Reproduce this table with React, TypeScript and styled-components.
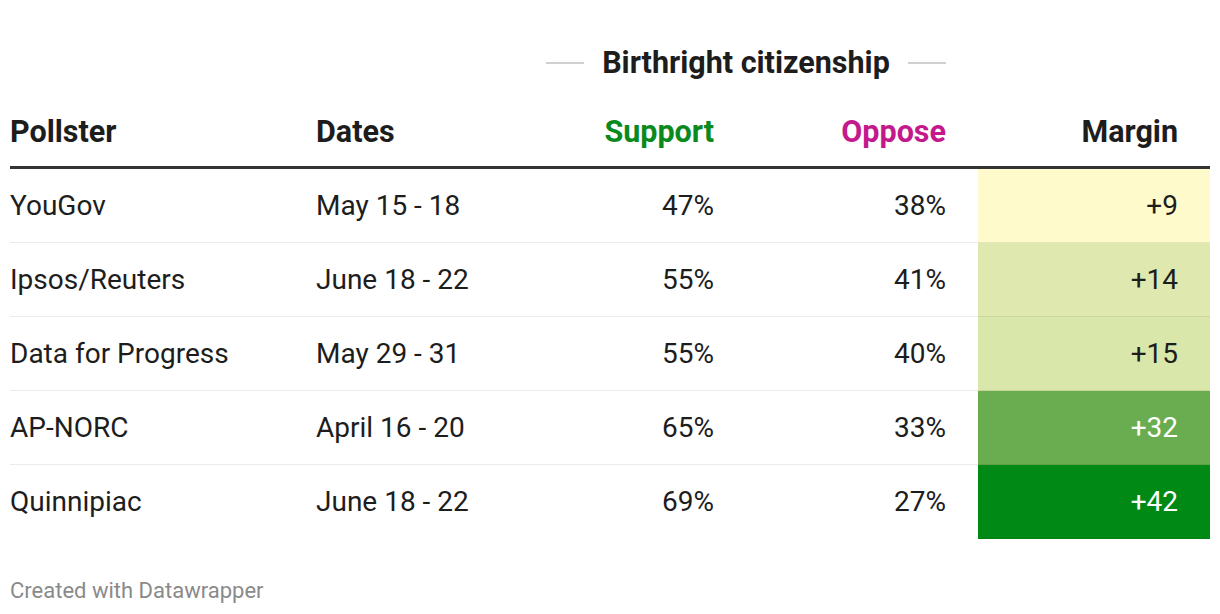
import styled, { createGlobalStyle } from "styled-components";

interface IPoll {
  pollster: string;
  dates: string;
  support: number;
  oppose: number;
  bg: string;
  light: boolean;
}

const polls: IPoll[] = [
  { pollster: "YouGov", dates: "May 15 - 18", support: 47, oppose: 38, bg: "#fefacb", light: false },
  { pollster: "Ipsos/Reuters", dates: "June 18 - 22", support: 55, oppose: 41, bg: "#dee8af", light: false },
  { pollster: "Data for Progress", dates: "May 29 - 31", support: 55, oppose: 40, bg: "#d9e7aa", light: false },
  { pollster: "AP-NORC", dates: "April 16 - 20", support: 65, oppose: 33, bg: "#6aad50", light: true },
  { pollster: "Quinnipiac", dates: "June 18 - 22", support: 69, oppose: 27, bg: "#008a15", light: true },
];

const GlobalStyle = createGlobalStyle`
  html, body {
    margin: 0;
    padding: 0;
    background: #ffffff;
  }
  body {
    font-family: Roboto, "Liberation Sans", sans-serif;
    color: #1d1d1d;
  }
`;

const COLUMNS = "306px 230px 184px 248px 232px";

const Chart = styled.div`
  width: 1200px;
  padding: 43px 10px 0;
`;

const TitleRow = styled.div`
  display: grid;
  grid-template-columns: ${COLUMNS};
`;

const GroupTitle = styled.div`
  grid-column: 3 / span 2;
  display: flex;
  align-items: center;
  gap: 18px;
  padding-right: 32px;
  font-size: 30.5px;
  line-height: 40px;
  font-weight: 700;
  white-space: nowrap;
`;

const TitleLine = styled.span`
  flex: 1;
  height: 2px;
  background: #d0d0d0;
`;

const Row = styled.div<{ $header?: boolean; $last?: boolean }>`
  display: grid;
  grid-template-columns: ${COLUMNS};
  height: ${(p) => (p.$header ? "52px" : "73px")};
  margin-top: ${(p) => (p.$header ? "31px" : "0")};
  border-bottom: ${(p) =>
    p.$header ? "3px solid #333333" : p.$last ? "none" : "1px solid rgba(0, 0, 0, 0.08)"};
`;

const Cell = styled.div<{ $right?: boolean; $pad?: number; $color?: string; $header?: boolean }>`
  display: flex;
  align-items: ${(p) => (p.$header ? "flex-end" : "center")};
  justify-content: ${(p) => (p.$right ? "flex-end" : "flex-start")};
  padding-right: ${(p) => p.$pad ?? 0}px;
  padding-bottom: ${(p) => (p.$header ? "17px" : "0")};
  font-size: ${(p) => (p.$header ? "30.5px" : "28px")};
  line-height: 36px;
  font-weight: ${(p) => (p.$header ? 700 : 400)};
  color: ${(p) => p.$color ?? "#1d1d1d"};
  white-space: nowrap;
`;

const MarginCell = styled(Cell)<{ $bg: string; $light: boolean }>`
  background: ${(p) => p.$bg};
  color: ${(p) => (p.$light ? "#ffffff" : "#1d1d1d")};
  margin-bottom: -1px;
  border-bottom: 1px solid rgba(0, 0, 0, 0.08);
`;

const Footer = styled.div`
  margin-top: 40px;
  font-size: 22px;
  line-height: 26px;
  color: #8a8a8a;
`;

export default function App() {
  return (
    <>
      <GlobalStyle />
      <Chart>
        <TitleRow>
          <GroupTitle>
            <TitleLine />
            Birthright citizenship
            <TitleLine />
          </GroupTitle>
        </TitleRow>
        <Row $header>
          <Cell $header>Pollster</Cell>
          <Cell $header>Dates</Cell>
          <Cell $header $right $pad={16} $color="#0a8a1e">Support</Cell>
          <Cell $header $right $pad={32} $color="#c4198c">Oppose</Cell>
          <Cell $header $right $pad={32}>Margin</Cell>
        </Row>
        {polls.map((poll, index) => (
          <Row key={poll.pollster} $last={index === polls.length - 1}>
            <Cell>{poll.pollster}</Cell>
            <Cell>{poll.dates}</Cell>
            <Cell $right $pad={16}>{poll.support}%</Cell>
            <Cell $right $pad={32}>{poll.oppose}%</Cell>
            <MarginCell $right $pad={32} $bg={poll.bg} $light={poll.light}>
              +{poll.support - poll.oppose}
            </MarginCell>
          </Row>
        ))}
        <Footer>Created with Datawrapper</Footer>
      </Chart>
    </>
  );
}
